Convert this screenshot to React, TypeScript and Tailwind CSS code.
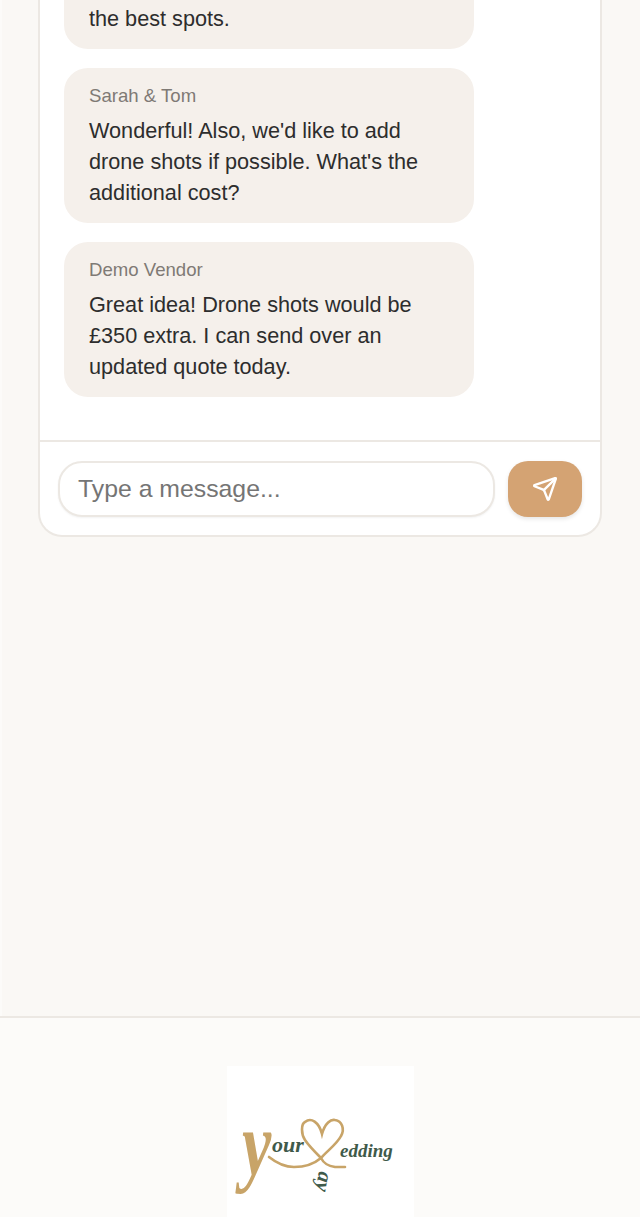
import { Send } from "lucide-react";

function Bubble({ name, lines, first }: { name?: string; lines: string[]; first?: boolean }) {
  return (
    <div className={`w-[410px] rounded-[24px] bg-[#f5f0eb] px-[25px] ${first ? "h-[49px] rounded-t-none pt-[3px]" : "pt-[15px] pb-[15px]"}`}>
      {name && <div className="text-[18.6px] leading-[25px] text-[#7f7a75] mb-[7px]">{name}</div>}
      {lines.map((l) => (
        <div key={l} className="text-[21.67px] leading-[31px] text-[#2d2d2d] whitespace-nowrap">{l}</div>
      ))}
    </div>
  );
}

function Logo() {
  const serif = "'Liberation Serif', serif";
  return (
    <svg width="187" height="151" viewBox="0 0 187 151" className="block">
      <path
        d="M42 91 C52 99 60 101 67 101 C78 101 87 98 94 92 C88 86 82 80 78 74 C74 68 74 58 78 56 C84 51 92 56 95 68 C98 57 104 53 108 54 C115 55 118 63 114 70 C110 78 100 85 94 92 C97 98 101 100 108 101 L118 101"
        fill="none"
        stroke="#c8a468"
        strokeWidth="2.6"
        strokeLinecap="round"
      />
      <text transform="translate(15,109) scale(0.72,1)" fontFamily={serif} fontStyle="italic" fontWeight="700" fontSize="92" fill="#c8a468">y</text>
      <text x="45" y="86" fontFamily={serif} fontStyle="italic" fontWeight="700" fontSize="22" fill="#3f5a4a">our</text>
      <text x="113" y="91" fontFamily={serif} fontStyle="italic" fontWeight="700" fontSize="19" fill="#3f5a4a">edding</text>
      <text transform="translate(92,105) rotate(100)" fontFamily={serif} fontStyle="italic" fontWeight="700" fontSize="21" fill="#3f5a4a">ay</text>
    </svg>
  );
}

export default function App() {
  return (
    <div className="h-[1217px] overflow-hidden bg-[#faf8f5] font-['Liberation_Sans',Arial,sans-serif] flex flex-col">
      <main className="h-[1016px] shrink-0 pr-[38px] pl-[36px] border-l-2 border-[#fcfbf9]">
        <section className="h-[537px] rounded-b-[24px] border-x-2 border-b-2 border-[#ece8e3] bg-white flex flex-col">
          <div className="flex-1 pl-[24px] flex flex-col gap-[19px]">
            <Bubble first lines={["the best spots."]} />
            <Bubble name="Sarah & Tom" lines={["Wonderful! Also, we'd like to add", "drone shots if possible. What's the", "additional cost?"]} />
            <Bubble name="Demo Vendor" lines={["Great idea! Drone shots would be", "£350 extra. I can send over an", "updated quote today."]} />
          </div>
          <div className="h-[95px] shrink-0 border-t-2 border-[#ece8e3] px-[18px] pt-[19px] flex gap-[13px]">
            <div className="w-[437px] h-[56px] rounded-[24px] border-2 border-[#ece8e3] bg-white shadow-[0_1px_2px_rgba(0,0,0,0.05)] pl-[18px] flex items-center text-[24.8px] text-[#757575]">
              Type a message...
            </div>
            <button className="w-[74px] h-[56px] rounded-[20px] bg-[#d4a373] shadow-[0_2px_4px_rgba(0,0,0,0.1)] flex items-center justify-center">
              <Send size={26} color="#fff" strokeWidth={2.2} />
            </button>
          </div>
        </section>
      </main>
      <footer className="flex-1 border-t-2 border-[#ece8e3] bg-[#fcfbf9] pt-[48px] flex justify-center items-start">
        <div className="bg-white w-[187px] h-[151px]">
          <Logo />
        </div>
      </footer>
    </div>
  );
}
